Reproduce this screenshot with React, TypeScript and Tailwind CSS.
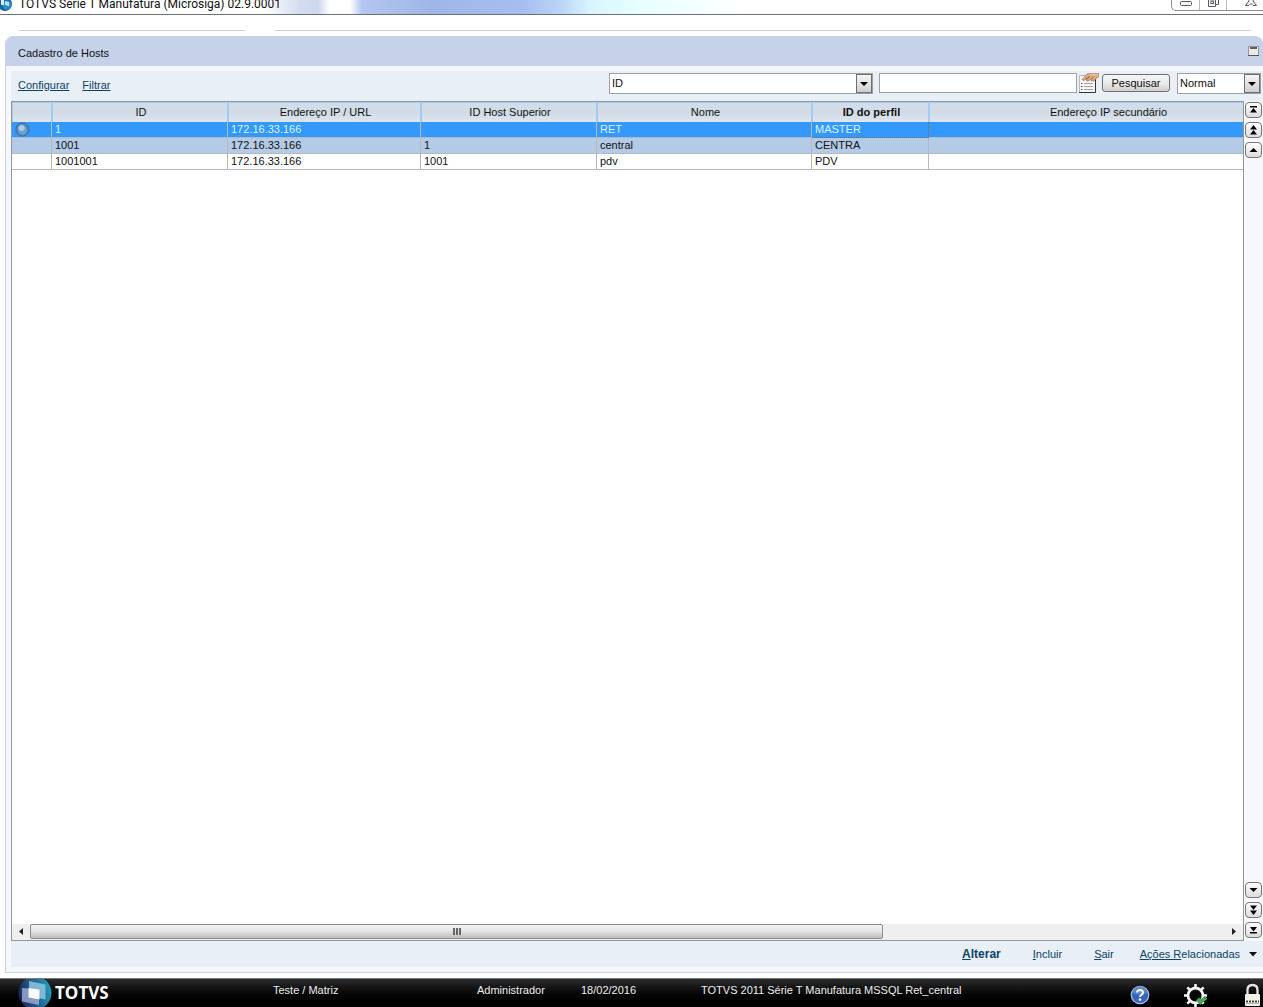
import React from "react";

type ColumnDef = { title: string; width: string; bold?: boolean };

const columns: ColumnDef[] = [
  { title: "", width: "w-[40px]" },
  { title: "ID", width: "w-[176px]" },
  { title: "Endereço IP / URL", width: "w-[193px]" },
  { title: "ID Host Superior", width: "w-[176px]" },
  { title: "Nome", width: "w-[215px]" },
  { title: "ID do perfil", width: "w-[117px]", bold: true },
  { title: "Endereço IP secundário", width: "w-[357px]" },
];

const rows = [
  ["1", "172.16.33.166", "", "RET", "MASTER", ""],
  ["1001", "172.16.33.166", "1", "central", "CENTRA", ""],
  ["1001001", "172.16.33.166", "1001", "pdv", "PDV", ""],
];

const rowStyles = [
  "bg-[#3399ff] text-[#d8f4ff]",
  "bg-[#b3cbe6] text-[#111]",
  "bg-white text-[#111]",
];

function TitleBar() {
  return (
    <header className="flex h-[15px] shrink-0 items-end overflow-hidden border-b border-[#6c7080] bg-[linear-gradient(90deg,#ffffff_0px,#ffffff_262px,#e6ebf6_284px,#d3dcf0_300px,#cdd8f0_318px,#ffffff_330px,#ffffff_350px,#b3c6ee_362px,#9fb6e8_430px,#a5bdf0_520px,#b9d4f6_560px,#d8f5ff_590px,#e6ffff_640px,#ffffff_740px)]">
      <svg className="mr-[5px] h-[14px] w-[14px] shrink-0" viewBox="0 0 14 14" aria-hidden="true">
        <circle cx="5" cy="4" r="7" fill="#17669c" />
        <circle cx="7" cy="5" r="4.5" fill="#2a8fc4" />
        <path d="M1 -1 L4 0 V5 L1 5Z" fill="#d9eef8" />
        <path d="M5 1 L9 2 V6 L5 5Z" fill="#b7e0f2" />
      </svg>
      <h1 className="whitespace-nowrap pb-px font-[Roboto,'Open_Sans',sans-serif] text-[12px] leading-[18px] text-[#111]">
        TOTVS Série T Manufatura (Microsiga) 02.9.0001
      </h1>
      <div className="mb-[3px] ml-auto flex h-[11px] rounded-bl-[5px] border-b border-l border-[#909090] bg-white">
        <button aria-label="Minimizar" className="flex w-[28px] justify-center border-r border-[#bbb]">
          <svg width="14" height="8" viewBox="0 0 14 8">
            <rect x="1.5" y="1.5" width="11" height="4" rx="1" fill="#f5f5f5" stroke="#555a66" />
          </svg>
        </button>
        <button aria-label="Restaurar" className="flex w-[27px] justify-center border-r border-[#bbb]">
          <svg width="14" height="8" viewBox="0 0 14 8">
            <path d="M10 -1H12.500V4.500H10" fill="none" stroke="#555a66" />
            <path d="M2.500 -1V6.500H9.500V-1" fill="#f5f5f5" stroke="#555a66" />
            <rect x="5" y="1" width="2.500" height="2.500" fill="none" stroke="#555a66" />
          </svg>
        </button>
        <button aria-label="Fechar" className="flex w-[36px] justify-center pl-3">
          <svg width="14" height="8" viewBox="0 0 14 8">
            <path d="M4.500 -1L5 1L1.500 5.500H5L7 3.500L9 5.500H12.500L9 1L9.500 -1" fill="#f8f8f8" stroke="#555a66" />
          </svg>
        </button>
      </div>
    </header>
  );
}

function SelectBox({ label, value, width }: { label: string; value: string; width: string }) {
  return (
    <div className={"relative h-[21px] border border-[#9b9fa6] bg-white " + width}>
      <select
        aria-label={label}
        defaultValue={value}
        className="h-full w-full appearance-none bg-transparent pl-[2px] text-[11px] text-[#111] outline-none"
      >
        <option>{value}</option>
      </select>
      <span className="pointer-events-none absolute inset-y-0 right-0 flex w-[16px] items-center justify-center border border-[#6e6e6e] bg-linear-to-b from-[#f5f5f5] to-[#cfcfcf]">
        <svg width="8" height="4" viewBox="0 0 8 4" aria-hidden="true">
          <path d="M0 0H8L4 4Z" fill="#000" />
        </svg>
      </span>
    </div>
  );
}

function ListHandIcon() {
  return (
    <svg width="20" height="20" viewBox="0 0 20 20" aria-hidden="true">
      <path d="M0.500 2.500H16.500V19.500H0.500Z" fill="#f7f7f7" stroke="#b9b9b9" />
      <path d="M16.500 6V19.500H0" fill="none" stroke="#333" />
      <path d="M5 10.500H14M5 13.500H14M5 16.500H14" stroke="#a4a4a4" />
      <path d="M2 10.500H3.500M2 13.500H3.500M2 16.500H3.500" stroke="#555" />
      <path
        d="M3 6.500L8 1L12 0H20V3.500L17 5.500L15 8H12.500L12 6.500L9 8H7.500L8 6L4 7.500Z"
        fill="#dfab80"
        stroke="#94694a"
        strokeWidth="0.600"
      />
      <path d="M7 6L11 3.500M12 6.500L14.500 4" stroke="#6e452a" strokeWidth="0.800" />
      <path d="M11 1.500H19" stroke="#f3c79d" />
    </svg>
  );
}

function Toolbar() {
  return (
    <div className="flex h-[30px] shrink-0 items-start bg-[#e9eff6] pr-[2px] pt-[2px]">
      <nav className="flex flex-1 gap-[13px] pl-[7px] pt-[4px] leading-4 text-[#0c4266]">
        <a href="#configurar" className="underline">Configurar</a>
        <a href="#filtrar" className="underline">Filtrar</a>
      </nav>
      <SelectBox label="Campo de pesquisa" value="ID" width="w-[264px]" />
      <input
        type="text"
        aria-label="Texto da pesquisa"
        className="ml-[6px] h-[20px] w-[198px] border border-[#9b9fa6] bg-white px-1 outline-none"
      />
      <button aria-label="Opções de pesquisa" className="ml-[2px] h-[20px]">
        <ListHandIcon />
      </button>
      <button className="ml-[3px] mt-[1px] h-[18px] w-[68px] rounded-[3px] border border-[#707070] bg-linear-to-b from-[#f6f6f6] via-[#ebebeb] to-[#cfcfcf] leading-4 text-[#111]">
        Pesquisar
      </button>
      <div className="pl-[7px]">
        <SelectBox label="Modo" value="Normal" width="w-[84px]" />
      </div>
    </div>
  );
}

function HostTable() {
  return (
    <table className="w-[1274px] table-fixed border-separate border-spacing-0">
      <thead>
        <tr>
          {columns.map((c, i) => (
            <th
              key={i}
              className={
                "h-[20px] border-x border-t border-[#a2cbf5] bg-linear-to-b from-[#d3dde9] via-[#d2dbe5] to-[#dbe6f0] p-0 pb-[2px] pl-[2px] text-center leading-4 text-[#111] " +
                c.width +
                (c.bold ? " font-bold" : " font-normal")
              }
            >
              {c.title}
            </th>
          ))}
        </tr>
      </thead>
      <tbody>
        {rows.map((row, r) => (
          <tr key={r} className={rowStyles[r]}>
            <td className="h-[16px] border-b border-r border-[#b4b9bf] p-0">
              {r === 0 && (
                <svg className="ml-[3px] block" width="15" height="15" viewBox="0 0 15 15" role="img" aria-label="Ativo">
                  <circle cx="7.500" cy="7.500" r="6.700" fill="#4f86bd" stroke="#426f9c" />
                  <circle cx="7.500" cy="8" r="4.500" fill="#6ba1d4" />
                  <circle cx="6.500" cy="6" r="3" fill="#a9cdec" />
                </svg>
              )}
            </td>
            {row.map((cell, i) => (
              <td
                key={i}
                className={
                  r === 0 && i === 4
                    ? "h-[16px] border-b border-r border-dotted border-[#7a6a60] p-0 pl-[3px] leading-[15px]"
                    : "h-[16px] border-b border-r border-[#b4b9bf] p-0 pl-[3px] leading-[15px]"
                }
              >
                {cell}
              </td>
            ))}
          </tr>
        ))}
      </tbody>
    </table>
  );
}

function HorizontalScrollbar() {
  return (
    <div className="flex h-[16px] shrink-0 items-start bg-[#efefef]">
      <button aria-label="Rolar para a esquerda" className="flex h-[15px] w-[18px] items-center justify-center">
        <svg width="4" height="7" viewBox="0 0 4 7"><path d="M4 0V7L0 3.500Z" fill="#222" /></svg>
      </button>
      <div className="flex-1">
        <div className="flex h-[15px] w-[71.4%] items-center justify-center gap-px rounded-[2px] border border-[#8e8e8e] bg-linear-to-b from-[#f3f3f3] from-0% via-[#e6e6e8] via-45% to-[#bdbdc1]">
          <span className="h-[7px] w-[2px] bg-[#666]" />
          <span className="h-[7px] w-[2px] bg-[#666]" />
          <span className="h-[7px] w-[2px] bg-[#666]" />
        </div>
      </div>
      <button aria-label="Rolar para a direita" className="flex h-[15px] w-[18px] items-center justify-center">
        <svg width="4" height="7" viewBox="0 0 4 7"><path d="M0 0V7L4 3.500Z" fill="#222" /></svg>
      </button>
    </div>
  );
}

function ScrollButton({ label, d }: { label: string; d: string }) {
  return (
    <button
      aria-label={label}
      className="flex h-[16px] w-[17px] items-center justify-center rounded-[4px] border border-[#777] bg-linear-to-b from-white to-[#dcdcdc]"
    >
      <svg width="9" height="10" viewBox="0 0 9 10"><path d={d} fill="#000" /></svg>
    </button>
  );
}

function VerticalControls() {
  return (
    <div className="flex w-[19px] shrink-0 flex-col justify-between bg-[#f7f8fc] pb-[3px] pl-px pt-px">
      <div className="flex flex-col gap-1">
        <ScrollButton label="Primeiro" d="M1 1H8V2.500H1ZM4.500 3L8 7.500H1Z" />
        <ScrollButton label="Página anterior" d="M4.500 0L8 4.500H1ZM4.500 5L8 9.500H1Z" />
        <ScrollButton label="Anterior" d="M4.500 3L8.500 7H0.500Z" />
      </div>
      <div className="flex flex-col gap-1">
        <ScrollButton label="Próximo" d="M0.500 3H8.500L4.500 7Z" />
        <ScrollButton label="Próxima página" d="M1 0.500H8L4.500 5ZM1 5.500H8L4.500 10Z" />
        <ScrollButton label="Último" d="M1 2H8L4.500 6.500ZM1 7H8V8.500H1Z" />
      </div>
    </div>
  );
}

function ActionBar() {
  return (
    <div className="flex h-[26px] shrink-0 items-center justify-end bg-[#e9eff6] pr-[6px] leading-4 text-[#0c4266]">
      <a href="#alterar" className="mr-8 text-[12px] font-bold"><u>A</u>lterar</a>
      <a href="#incluir" className="mr-8"><u>I</u>ncluir</a>
      <a href="#sair" className="mr-[26px]"><u>S</u>air</a>
      <button className="flex items-center gap-[9px]">
        <span><u>Ações R</u>elacionadas</span>
        <svg width="8" height="5" viewBox="0 0 8 5" aria-hidden="true"><path d="M0 0H8L4 4.500Z" fill="#111" /></svg>
      </button>
    </div>
  );
}

function TotvsLogo() {
  return (
    <svg className="ml-[18px] h-[29px] w-[34px] shrink-0" viewBox="0 0 34 29" aria-hidden="true">
      <defs>
        <linearGradient id="ball" x1="0" y1="0.600" x2="1" y2="0.300">
          <stop offset="0" stopColor="#1c2458" />
          <stop offset="0.500" stopColor="#21618e" />
          <stop offset="1" stopColor="#20a0bc" />
        </linearGradient>
        <radialGradient id="glow">
          <stop offset="0" stopColor="#ffffff" />
          <stop offset="0.700" stopColor="#fafdff" />
          <stop offset="1" stopColor="#e6f4fa" />
        </radialGradient>
      </defs>
      <circle cx="17" cy="14" r="16.500" fill="url(#ball)" />
      <path d="M11 2L27.500 5.500V20.500L11 17Z" fill="#8fc3dc" fillOpacity="0.850" />
      <path d="M4 9L21 10.500V26L4 22.500Z" fill="#a3add6" fillOpacity="0.800" />
      <path d="M10.500 9L21.500 10.500V20.500L10.500 18.500Z" fill="url(#glow)" />
    </svg>
  );
}

function HelpIcon() {
  return (
    <svg width="20" height="20" viewBox="0 0 20 20" aria-hidden="true">
      <circle cx="10" cy="10" r="8.700" fill="#3565bb" stroke="#a4bce5" strokeWidth="1.300" />
      <path d="M3 8A7 7 0 0 1 17 8Q10 11 3 8Z" fill="#6b91d4" fillOpacity="0.700" />
      <path d="M7 7.500Q7.200 4.900 10 4.900Q13 4.900 13 7.500Q13 9 11.200 10Q10 10.800 10 12" fill="none" stroke="#fff" strokeWidth="2" />
      <circle cx="10" cy="14.600" r="1.300" fill="#fff" />
    </svg>
  );
}

function GearIcon() {
  return (
    <svg width="25" height="25" viewBox="0 0 25 25" aria-hidden="true">
      <g stroke="#f4f4f4" strokeWidth="2.600">
        <path d="M12.500 1V5M12.500 20V24M1 12.500H5M20 12.500H24M4.300 4.300L7.200 7.200M17.800 17.800L20.700 20.700M4.300 20.700L7.200 17.800M17.800 7.200L20.700 4.300" />
      </g>
      <circle cx="12.500" cy="12.500" r="7.500" fill="none" stroke="#f4f4f4" strokeWidth="2.800" />
      <path d="M14.500 16L17.500 19L23 14.500" fill="none" stroke="#4aa556" strokeWidth="4" />
    </svg>
  );
}

function LockIcon() {
  return (
    <svg width="17" height="24" viewBox="0 0 17 24" aria-hidden="true">
      <path d="M3.500 12V7Q3.500 2 8.500 2Q13.500 2 13.500 7V12" fill="none" stroke="#e6e6e6" strokeWidth="2.300" />
      <rect x="1" y="11" width="15" height="12" rx="1" fill="#f1f1ec" />
      <path d="M2 18.500H15" stroke="#444" strokeWidth="2" strokeDasharray="2 1" />
      <path d="M2 20.500H15" stroke="#b7bd8a" />
    </svg>
  );
}

function StatusBar() {
  return (
    <footer className="flex h-[29px] shrink-0 items-start overflow-hidden border-t border-[#777] bg-linear-to-b from-[#2b2c2d] via-[#080808] via-50% to-black text-[#ededed]">
      <div className="flex w-[273px] shrink-0 items-start">
        <TotvsLogo />
        <span className="ml-[3px] pt-[2px] font-['Open_Sans','Noto_Sans',sans-serif] text-[17px] font-bold leading-[24px] text-white">
          TOTVS
        </span>
      </div>
      <span className="w-[204px] shrink-0 pt-[3px] leading-4">Teste / Matriz</span>
      <span className="w-[104px] shrink-0 pt-[3px] leading-4">Administrador</span>
      <span className="w-[120px] shrink-0 pt-[3px] leading-4">18/02/2016</span>
      <span className="flex-1 whitespace-nowrap pt-[3px] leading-4">TOTVS 2011 Série T Manufatura MSSQL Ret_central</span>
      <div className="flex items-start pr-[2px] pt-[4px]">
        <button aria-label="Ajuda" className="mr-[33px] pt-[2px]"><HelpIcon /></button>
        <button aria-label="Configurações" className="mr-[36px]"><GearIcon /></button>
        <button aria-label="Bloquear"><LockIcon /></button>
      </div>
    </footer>
  );
}

export default function App() {
  return (
    <div className="flex h-screen flex-col overflow-hidden bg-white font-['Liberation_Sans',Arial,sans-serif] text-[11px]">
      <TitleBar />
      <div className="flex h-[21px] shrink-0 gap-[30px] pl-[19px] pr-[12px] pt-[15px]">
        <div className="h-px w-[226px] bg-[#ccd0d8]" />
        <div className="h-px flex-1 bg-[#ccd0d0]" />
      </div>
      <main className="mb-[5px] ml-[5px] flex min-h-0 flex-1 flex-col overflow-hidden rounded-t-[8px] border-b border-l border-[#ccd2de] bg-[#f5f8fe]">
        <div className="flex h-[30px] shrink-0 items-center justify-between bg-[#c5d2ea] pl-[12px] pr-[4px]">
          <h2 className="pt-[4px] leading-4 text-[#111]">Cadastro de Hosts</h2>
          <button aria-label="Recolher painel">
            <svg width="11" height="10" viewBox="0 0 11 10">
              <rect x="0.500" y="0.500" width="10" height="9" fill="#e9e9e9" stroke="#999" />
              <path d="M2 2H9" stroke="#333" strokeWidth="1.500" />
              <path d="M0 9.500H11" stroke="#555" />
            </svg>
          </button>
        </div>
        <div className="flex min-h-0 flex-1 flex-col pb-[5px] pl-[5px] pt-[5px]">
          <Toolbar />
          <div className="flex min-h-0 flex-1">
            <div className="flex min-w-0 flex-1 flex-col border border-[#92979d] bg-white">
              <div className="min-h-0 flex-1 overflow-hidden">
                <HostTable />
              </div>
              <HorizontalScrollbar />
            </div>
            <VerticalControls />
          </div>
          <ActionBar />
        </div>
      </main>
      <StatusBar />
    </div>
  );
}
